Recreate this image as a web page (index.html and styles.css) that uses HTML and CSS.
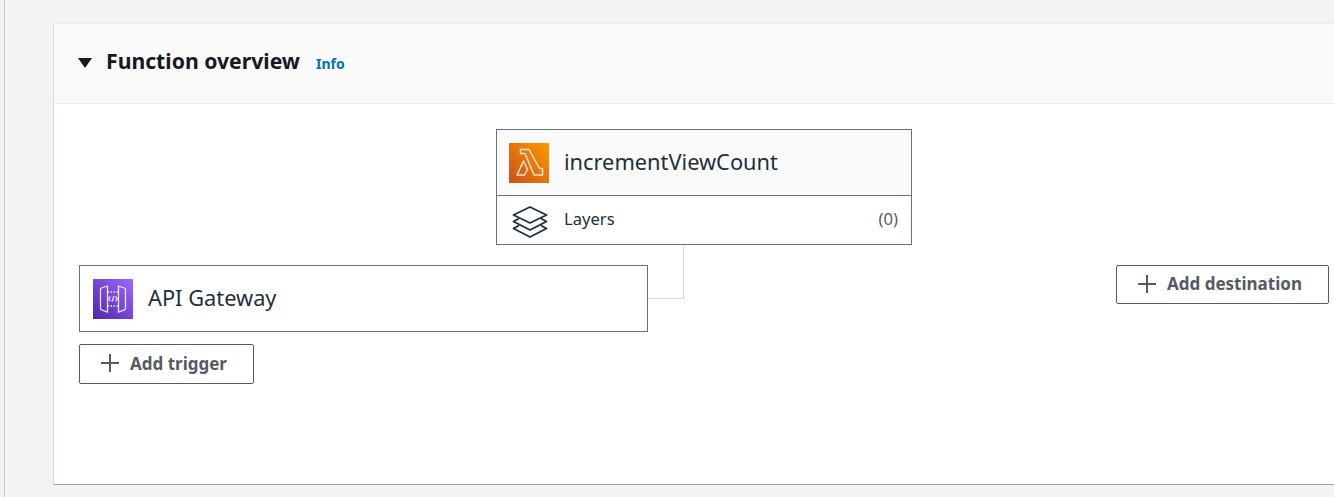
FILE: index.html

```html
<!DOCTYPE html>
<html lang="en">
<head>
  <meta charset="UTF-8" />
  <title>Function overview</title>
  <link rel="stylesheet" href="styles.css">
</head>
<body>
  <div class="content">
    <section class="panel">
      <header class="panel-header">
        <span class="caret"></span>
        <h2>Function overview</h2>
        <a class="info" href="#">Info</a>
      </header>
      <div class="diagram">
        <div class="function-row">
          <div class="function-box">
            <div class="function-name">
              <svg class="service-icon" viewBox="0 0 40 40">
                <defs>
                  <linearGradient id="lambdaBg" x1="0" y1="1" x2="1" y2="0">
                    <stop offset="0" stop-color="#c8511b"/>
                    <stop offset="1" stop-color="#ff9900"/>
                  </linearGradient>
                </defs>
                <rect width="40" height="40" fill="url(#lambdaBg)"/>
                <path d="M11.500 6.500h8.500l10.500 19h3v6.500h-8.500l-9-21.500h-4.500z M14.500 18l4 8.500-3 5.500h-7.500z" fill="none" stroke="#fff" stroke-opacity=".8" stroke-width="1.500" stroke-linejoin="round"/>
              </svg>
              <span class="node-name">incrementViewCount</span>
            </div>
            <div class="layers-row">
              <svg class="layers-icon" viewBox="0 0 36 32">
                <path d="M18 1 34.500 9 18 17 1.500 9z" fill="none"/>
                <path d="M7 12.500 1.500 15.500 18 24 34.500 15.500 29 12.500" fill="none"/>
                <path d="M7 19.500 1.500 22.500 18 31 34.500 22.500 29 19.500" fill="none"/>
              </svg>
              <span class="layers-label">Layers</span>
              <span class="layers-count">(0)</span>
            </div>
          </div>
        </div>
        <div class="connector"></div>
        <div class="lower-row">
          <div class="trigger-col">
            <div class="trigger-box">
              <svg class="service-icon" viewBox="0 0 40 40">
                <defs>
                  <linearGradient id="apiBg" x1="0" y1="1" x2="1" y2="0">
                    <stop offset="0" stop-color="#4d27a8"/>
                    <stop offset="1" stop-color="#a166ff"/>
                  </linearGradient>
                </defs>
                <rect width="40" height="40" fill="url(#apiBg)"/>
                <g fill="none" stroke="#fff" stroke-opacity=".85" stroke-width="1.300">
                  <path d="M14.500 7 8.500 9q-1 .4-1 1.500v19q0 1 1 1.400l6 2.100z"/>
                  <path d="M25.500 7l6 2q1 .4 1 1.500v19q0 1-1 1.400l-6 2.100z"/>
                  <path d="M14.500 13h11M14.500 27h11" stroke-dasharray="1.500 1.500"/>
                  <path d="M17.500 17.500l-2 2.300 2 2.300M22.500 17.500l2 2.300-2 2.300M20.900 17l-1.800 5.600"/>
                </g>
              </svg>
              <span class="node-name">API Gateway</span>
            </div>
            <button class="add-btn trigger-btn" type="button"><span class="plus"></span>Add trigger</button>
          </div>
          <button class="add-btn destination-btn" type="button"><span class="plus"></span>Add destination</button>
        </div>
      </div>
    </section>
  </div>
</body>
</html>
```

FILE: styles.css

```css
html, body {
  margin: 0;
  padding: 0;
  height: 100%;
  overflow: hidden;
}
body {
  background: #f2f3f3;
  color: #16191f;
  font-family: "Noto Sans", "Open Sans", sans-serif;
}
.content {
  height: 497px;
  box-sizing: border-box;
  margin-left: 4px;
  border-left: 1px solid #c9cccc;
  padding: 23px 0 0 48px;
}
.panel {
  height: 462px;
  box-sizing: border-box;
  background: #fff;
  border-top: 1px solid #eaeded;
  border-left: 1px solid #d5dbdb;
  border-bottom: 1px solid #9aa3a3;
}
.panel-header {
  height: 80px;
  box-sizing: border-box;
  display: flex;
  align-items: center;
  padding-left: 24px;
  background: #fafafa;
  border-bottom: 1px solid #eaeded;
}
.caret {
  width: 0;
  height: 0;
  border-left: 7px solid transparent;
  border-right: 7px solid transparent;
  border-top: 10px solid #16191f;
  margin-right: 14px;
  position: relative;
  top: -1px;
}
.panel-header h2 {
  margin: 0;
  font-size: 21.200px;
  font-weight: 700;
  line-height: 28px;
  position: relative;
  top: -3px;
}
.info {
  margin-left: 16px;
  color: #0073bb;
  font-size: 14px;
  font-weight: 700;
  text-decoration: none;
}
.diagram {
  position: relative;
  padding: 25px 0 0 25px;
}
.function-row {
  padding-left: 417px;
}
.function-box {
  width: 416px;
  box-sizing: border-box;
  border: 1px solid #687078;
}
.function-name {
  height: 65px;
  display: flex;
  align-items: center;
  padding-left: 12px;
  background: #fafafa;
  border-bottom: 1px solid #687078;
  font-size: 21.800px;
}
.node-name {
  margin-bottom: 2px;
  color: #232f3e;
}
.service-icon {
  width: 40px;
  height: 40px;
  margin-right: 15px;
  flex: none;
}
.layers-row {
  height: 48px;
  display: flex;
  align-items: center;
  padding: 0 13px 0 15px;
  font-size: 16.600px;
  color: #232f3e;
}
.layers-icon {
  width: 36px;
  height: 32px;
  margin-top: 3px;
  margin-right: 16px;
  stroke: #232f3e;
  stroke-width: 1.900;
  stroke-linejoin: round;
}
.layers-label {
  flex: 1;
  margin-bottom: 4px;
}
.layers-count {
  margin-bottom: 4px;
  color: #545b64;
}
.connector {
  position: absolute;
  left: 594px;
  top: 141px;
  width: 36px;
  height: 54px;
  box-sizing: border-box;
  border-right: 1px solid #d5dbdb;
  border-bottom: 1px solid #d5dbdb;
}
.lower-row {
  display: flex;
  align-items: flex-start;
  margin-top: 20px;
}
.trigger-box {
  width: 569px;
  height: 67px;
  box-sizing: border-box;
  display: flex;
  align-items: center;
  padding-left: 13px;
  border: 1px solid #687078;
  font-size: 21.800px;
}
.add-btn {
  display: flex;
  align-items: center;
  height: 40px;
  box-sizing: border-box;
  padding: 0 0 2px;
  background: #fff;
  border: 1px solid #545b64;
  border-radius: 2px;
  color: #545b64;
  font-family: inherit;
  font-size: 17px;
  font-weight: 700;
}
.trigger-btn {
  width: 175px;
  margin-top: 12px;
  padding-left: 21px;
}
.destination-btn {
  width: 213px;
  height: 39px;
  margin-left: 468px;
  padding-left: 21px;
}
.plus {
  position: relative;
  width: 18px;
  height: 18px;
  margin-right: 11px;
  flex: none;
}
.plus::before, .plus::after {
  content: "";
  position: absolute;
  background: #545b64;
}
.plus::before {
  left: 0;
  right: 0;
  top: 8px;
  height: 2px;
}
.plus::after {
  top: 0;
  bottom: 0;
  left: 8px;
  width: 2px;
}
```
